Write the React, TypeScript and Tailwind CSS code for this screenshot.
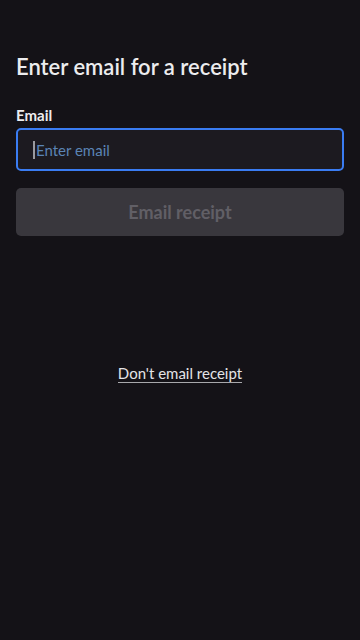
import React, { useState } from "react";

export default function App() {
  const [email, setEmail] = useState("");

  return (
    <div className="min-h-[640px] w-full bg-[#141217] px-4 pt-[52px] font-['Lato',sans-serif]">
      <h1 className="text-[22px] font-semibold leading-[30px] text-[#ececee]">Enter email for a receipt</h1>

      <label htmlFor="email" className="mt-[24px] block text-[15px] font-bold leading-[18px] text-[#ececee]">
        Email
      </label>
      <div className="mt-[4px] flex h-[43px] items-center rounded-[5px] border-2 border-[#3a7cf2] bg-[#1c1a20] pl-[15px]">
        <span className="h-[18px] w-[2px] bg-[#9a9aa0]" />
        <input
          id="email"
          value={email}
          onChange={(e) => setEmail(e.target.value)}
          placeholder="Enter email"
          className="h-full w-full bg-transparent pl-[1px] text-[15px] text-[#ececee] outline-none placeholder:text-[#5b84b5]"
        />
      </div>

      <button
        disabled
        className="mt-[17px] flex h-[48px] w-full items-center justify-center rounded-[5px] bg-[#39373d] text-[18px] font-bold text-[#615f66]"
      >
        Email receipt
      </button>

      <div className="mt-[128px] flex justify-center">
        <button className="border-b border-[#a8a8ac] text-[15px] leading-[18px] text-[#e4e4e6]">Don't email receipt</button>
      </div>
    </div>
  );
}
